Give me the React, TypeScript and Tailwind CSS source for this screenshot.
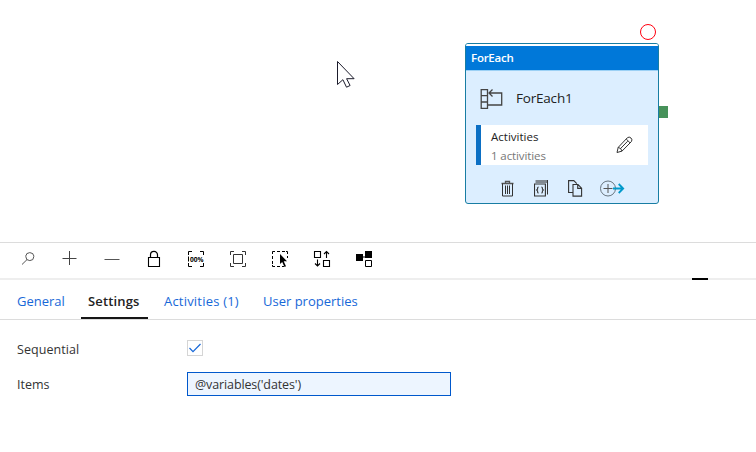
import React from "react";

const font = "font-['Open_Sans','Noto_Sans',sans-serif]";

function ForEachIcon() {
  return (
    <svg width="24" height="22" viewBox="0 0 24 22" fill="none" stroke="#444" strokeWidth="1.3">
      <path d="M1.2 1.7h6.3v18.6H1.2zM1.2 7.7h6.3M1.2 14h6.3" />
      <path d="M9.5 5h12.2v12H7.5M12.5 1.5 9 5l3.5 3.5" />
    </svg>
  );
}

function Pencil() {
  return (
    <svg width="17" height="18" viewBox="0 0 17 18" fill="none" stroke="#333">
      <path d="M1 16.5 2.2 11.4 11.3 1.8Q13.2.2 15 2T15.3 5.7L6 15.1ZM2.2 11.4Q5.2 11.8 6 15.1M10.2 3l3.8 3.8M4.3 12.8l7.4-7.6" />
    </svg>
  );
}

function Trash() {
  return (
    <svg width="14" height="17" viewBox="0 0 14 17" fill="none" stroke="#333">
      <path d="M.5 3.5h12M4.5 3.3V1.5h4v1.8" stroke="#555" strokeWidth="1.3" />
      <path d="M1.5 3.5v12.5h10V3.5M4.5 5.5v8.5M6.5 5.5v8.5M8.5 5.5v8.5" />
    </svg>
  );
}

function Braces() {
  return (
    <svg width="15" height="17" viewBox="0 0 15 17" fill="none" stroke="#333">
      <path d="M1.5 1.5H13" stroke="#808890" strokeWidth="3" />
      <path d="M13.5 0v14.5" />
      <path d="M.5 4h10.9v12H.5z" strokeWidth="1.1" />
      <path d="M4.6 7q-1 0-1 1v1.1l-1 .9 1 .9V12q0 1 1 1M7.4 7q1 0 1 1v1.1l1 .9-1 .9V12q0 1-1 1" strokeWidth="1.1" />
    </svg>
  );
}

function Copy() {
  return (
    <svg width="15" height="17" viewBox="0 0 15 17" fill="none" stroke="#333" strokeWidth="1.1">
      <path d="M4.7 12.5H.6V.6h5.2l3 3M5 4.5h5l3.6 3.7v7.9H5zM9.7 4.7v3.7h3.9" />
    </svg>
  );
}

function AddOutput() {
  return (
    <svg width="26" height="17" viewBox="0 0 26 17" fill="none">
      <circle cx="8" cy="8.5" r="7.5" stroke="#67747e" />
      <path d="M8 4v9M3.5 8.5h9" stroke="#555" />
      <path d="M13 8.5h10.5M18.7 4l4.5 4.5-4.5 4.5" stroke="#0099cb" strokeWidth="1.8" />
    </svg>
  );
}

function ForEachNode() {
  return (
    <div className="absolute left-[465px] top-[43px] flex h-[161px] w-[194px] flex-col rounded-[3px] border border-[#187da3] bg-[#dceeff]">
      <div className="flex h-[27px] items-center rounded-t-[2px] border-b border-t-2 border-b-[#9bd0f5] border-t-white bg-[#0078d9] pl-[5px] text-[11.5px] font-semibold tracking-[-0.25px] text-white">
        <span>ForEach</span>
      </div>
      <div className="flex h-[54px] items-center pl-3.5">
        <div className="pt-0.5"><ForEachIcon /></div>
        <span className="ml-3 text-[13.5px] tracking-[-0.2px] text-[#222]">ForEach1</span>
      </div>
      <div className="ml-2.5 flex h-10 w-[172px] items-center justify-between border-l-[5px] border-[#0b6fc4] bg-white pl-2.5 pr-[15px]">
        <div className="flex flex-col pt-px text-[11.5px] leading-[19px]">
          <span className="text-[#222]">Activities</span>
          <span className="tracking-[-0.1px] text-[#777]">1 activities</span>
        </div>
        <Pencil />
      </div>
      <div className="flex h-[38px] items-center pl-[35px] pt-2">
        <Trash />
        <div className="ml-[19px]"><Braces /></div>
        <div className="ml-[19px]"><Copy /></div>
        <div className="ml-[17px]"><AddOutput /></div>
      </div>
    </div>
  );
}

function Toolbar() {
  return (
    <div className="flex h-9 items-center border-t border-[#dcdcdc] pl-[19px] pb-[3px]">
      <div className="flex gap-[24px]">
        <svg width="18" height="18" viewBox="0 0 18 18" fill="none" stroke="#555">
          <circle cx="10.8" cy="6.6" r="4" /><path d="M8 9.6 3 14.5" />
        </svg>
        <svg width="18" height="18" viewBox="0 0 18 18" fill="none" stroke="#444">
          <path d="M8.5 1v14M1.5 8.5h14" />
        </svg>
        <svg width="18" height="18" viewBox="0 0 18 18" fill="none" stroke="#555">
          <path d="M1.5 9.5h15" />
        </svg>
        <svg width="18" height="18" viewBox="0 0 18 18" fill="none" stroke="#000">
          <path d="M3.5 7.5h11v9h-11z" strokeWidth="1.1" /><path d="M5.5 7V4.8a3.5 3.5 0 0 1 7 0V7" strokeWidth="1.2" />
        </svg>
        <svg width="18" height="18" viewBox="0 0 18 18" fill="none" stroke="#000">
          <path d="M1.5 5V1.5H5M13 1.5h3.5V5M1.5 13v3.5H5M13 16.5h3.5V13M1.5 6.5v5" />
          <text x="3" y="11.6" fontSize="7" fontWeight="700" fill="#000" stroke="none" textLength="13.5" lengthAdjust="spacingAndGlyphs">00%</text>
        </svg>
        <svg width="18" height="18" viewBox="0 0 18 18" fill="none" stroke="#333">
          <path d="M1.5 5V1.5H5M13 1.5h3.5V5M1.5 13v3.5H5M13 16.5h3.5V13M4.5 4.5h9v9h-9z" />
        </svg>
        <svg width="18" height="18" viewBox="0 0 18 18" fill="none" stroke="#000">
          <path d="M1.5 4V1.5H4M6 1.5h3M11 1.5h3M15 1.5h1.5V4M1.5 6v3M1.5 11v3M1.5 15v1.5H4M6 16.5h3M11 16.5h2M16.5 6v2" />
          <path d="M9 4v10l2.2-2.1 2.3 5 1.5-.7-2.3-4.9H16z" fill="#000" stroke="none" />
        </svg>
        <svg width="18" height="18" viewBox="0 0 18 18" fill="none" stroke="#000">
          <path d="M1.5 1.5h6v6h-6zM10.5 10.5h6v6h-6zM13.5 8V1.5M11 4l2.5-2.5L16 4M4.5 9.5V16M2 13.5 4.5 16 7 13.5" strokeWidth="1.1" />
        </svg>
        <svg width="18" height="18" viewBox="0 0 18 18" fill="none" stroke="#000">
          <path d="M1 4h7v7H1zM10 1h7v7h-7z" fill="#000" stroke="none" /><path d="M8 7h3M10.5 10.5h6v6h-6z" />
        </svg>
      </div>
    </div>
  );
}

export default function App() {
  return (
    <div className={`h-[452px] w-[756px] overflow-hidden bg-white text-[13px] text-[#333] ${font}`}>
      <div className="relative h-[242px]">
        <div className="absolute left-[640px] top-6 size-4 rounded-full border border-[#ff0010]" />
        <ForEachNode />
        <div className="absolute left-[659px] top-[106px] h-3 w-[9px] bg-[#47925a]" />
        <svg className="absolute left-[336px] top-[60px]" width="20" height="30" viewBox="0 0 20 30" fill="white" stroke="#1b1b2b">
          <path d="M1.5 1.5v23l5.4-4.8 3.6 7.5 3.6-1.7-3.5-6.8h7.5z" />
        </svg>
      </div>
      <Toolbar />
      <div className="h-0.5 bg-[#eee] pl-[692px]"><div className="h-0.5 w-4 bg-black" /></div>
      <div className="flex h-10 items-stretch border-b border-[#dcdcdc] pl-[17px] leading-[42px] text-[#1768d8]">
        <span className="w-16">General</span>
        <span className="mr-4 w-[67px] border-b-2 border-[#161616] pl-[7px] font-semibold tracking-[0.15px] text-[#222]">Settings</span>
        <span className="w-[99px] tracking-[0.2px]">Activities (1)</span>
        <span>User properties</span>
      </div>
      <div className="flex h-[52px] items-center pl-[17px] pt-1.5 text-[12.5px]">
        <span className="w-[170px] pt-0.5 font-medium tracking-[0.05px]">Sequential</span>
        <div className="-mt-0.5 size-4 border border-[#d5d5d5]">
          <svg width="14" height="14" viewBox="0 0 14 14" fill="none" stroke="#1768d8" strokeWidth="1.2"><path d="m1.5 7 3.5 3.7L12.5 3" /></svg>
        </div>
      </div>
      <div className="flex h-6 items-center pl-[17px] text-[12.5px]">
        <span className="w-[170px] pt-0.5 font-medium">Items</span>
        <div className="flex h-6 w-[264px] items-center border border-[#0058cc] bg-[#edf5ff] pl-[7px] pt-0.5 tracking-[-0.12px]">@variables('dates')</div>
      </div>
    </div>
  );
}
